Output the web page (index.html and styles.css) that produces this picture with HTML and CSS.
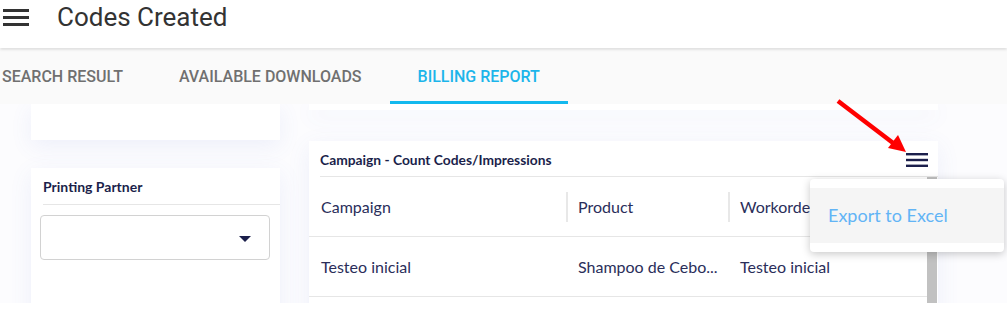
FILE: index.html
```html
<!DOCTYPE html>
<html lang="en">
<head>
    <meta charset="UTF-8">
    <meta name="viewport" content="width=device-width, initial-scale=1.0">
    <title>Codes Created</title>
    <link rel="stylesheet" href="styles.css">
</head>
<body>
    <header class="topbar">
        <svg class="menu-icon" width="26" height="18" viewBox="0 0 26 18">
            <rect x="0" y="1" width="26" height="3" fill="#333"/>
            <rect x="0" y="8" width="26" height="3" fill="#333"/>
            <rect x="0" y="15" width="26" height="3" fill="#333"/>
        </svg>
        <h1>Codes Created</h1>
    </header>

    <nav class="tabs">
        <div class="tab-list">
            <div class="tab">Search Result</div>
            <div class="tab">Available Downloads</div>
            <div class="tab active">Billing Report</div>
        </div>
    </nav>

    <main class="content">
        <div class="col-left">
            <div class="card card-top"></div>
            <div class="card filter-card">
                <div class="card-title">Printing Partner</div>
                <div class="select">
                    <span class="caret"></span>
                </div>
            </div>
        </div>

        <div class="col-right">
            <div class="card card-top-thin"></div>
            <div class="card report-card">
                <div class="report-head">
                    <span class="report-title">Campaign - Count Codes/Impressions</span>
                    <svg class="report-menu" width="22" height="14" viewBox="0 0 22 14">
                        <rect x="0" y="0" width="22" height="2.4" fill="#1b1f4b"/>
                        <rect x="0" y="5.8" width="22" height="2.4" fill="#1b1f4b"/>
                        <rect x="0" y="11.6" width="22" height="2.4" fill="#1b1f4b"/>
                    </svg>
                </div>
                <div class="table-wrap">
                    <div class="table">
                        <div class="row head">
                            <div class="cell">Campaign</div>
                            <div class="cell sep">Product</div>
                            <div class="cell sep">Workorder</div>
                        </div>
                        <div class="row">
                            <div class="cell">Testeo inicial</div>
                            <div class="cell">Shampoo de Cebo...</div>
                            <div class="cell">Testeo inicial</div>
                        </div>
                    </div>
                    <div class="scrollbar"></div>
                </div>

                <div class="dropdown">
                    <div class="dropdown-item">Export to Excel</div>
                </div>
            </div>
        </div>
    </main>

    <!-- annotation arrow pointing at the menu icon -->
    <svg class="arrow" width="76" height="60" viewBox="0 0 76 60">
        <line x1="3" y1="3" x2="62" y2="48" stroke="#ff0000" stroke-width="4.5"/>
        <polygon points="71,54 53,50 63,37" fill="#ff0000"/>
    </svg>
</body>
</html>
```

FILE: styles.css
```css
body {
    margin: 0;
    font-family: Roboto, "Liberation Sans", sans-serif;
    background: #ffffff;
    overflow: hidden;
    position: relative;
}
.topbar {
    height: 48px;
    box-sizing: border-box;
    padding-bottom: 14px;
    display: flex;
    align-items: center;
    background: #fff;
    box-shadow: 0 1px 3px rgba(0,0,0,0.18);
    position: relative;
    z-index: 2;
}
.menu-icon {
    margin-left: 3px;
}
.topbar h1 {
    margin: 0 0 0 28px;
    font-size: 26px;
    font-weight: 400;
    color: #333;
}
.tabs {
    height: 55px;
    background: #fafafa;
    margin-top: 1px;
}
.tab-list {
    display: flex;
    margin-left: -26px;
    height: 100%;
}
.tab {
    padding: 0 28px;
    display: flex;
    align-items: center;
    text-transform: uppercase;
    font-size: 16px;
    font-weight: 500;
    color: #707070;
    box-sizing: border-box;
    border-bottom: 3px solid transparent;
    padding-top: 3px;
}
.tab.active {
    color: #1cb5ea;
    border-bottom-color: #14b9ee;
}
.content {
    height: 199px;
    overflow: hidden;
    display: grid;
    grid-template-columns: 249px 629px;
    column-gap: 29px;
    padding-left: 31px;
    background: #fcfcfe;
    font-family: Lato, "Liberation Sans", sans-serif;
    color: #1b1f4b;
}
.col-left, .col-right {
    display: flex;
    flex-direction: column;
}
.col-left { gap: 28px; }
.col-right { gap: 31px; }
.card {
    background: #fff;
    box-shadow: 0 6px 22px rgba(90,110,210,0.09);
}
.card-top { height: 36px; flex: none; }
.card-top-thin { height: 6px; flex: none; }
.filter-card, .report-card { flex: 1; }
.card-title {
    font-weight: 700;
    font-size: 14px;
    margin-left: 12px;
    height: 36px;
    line-height: 38px;
    border-bottom: 1px solid #e6e6e6;
}
.select {
    margin: 10px 0 0 9px;
    width: 230px;
    height: 45px;
    box-sizing: border-box;
    border: 1px solid #d2d2d2;
    border-radius: 4px;
    position: relative;
}
.caret {
    position: absolute;
    right: 18px;
    top: 20px;
    width: 0;
    height: 0;
    border-left: 6px solid transparent;
    border-right: 6px solid transparent;
    border-top: 6px solid #1b1f4b;
}
.report-card {
    position: relative;
}
.report-head {
    margin-left: 11px;
    height: 35px;
    border-bottom: 1px solid #e6e6e6;
    display: flex;
    align-items: center;
    justify-content: space-between;
    padding-right: 10px;
}
.report-title {
    font-weight: 700;
    font-size: 13.8px;
    margin-top: 1px;
}
.report-menu {
    margin-top: 2px;
}
.table-wrap {
    display: flex;
}
.table {
    width: 618px;
}
.row {
    display: grid;
    grid-template-columns: 257px 162px 1fr;
    height: 59px;
    border-bottom: 1px solid #e6e6e6;
    align-items: center;
    font-size: 16px;
    color: #2a2e5a;
}
.cell {
    padding-left: 12px;
    white-space: nowrap;
    overflow: hidden;
}
.cell.sep {
    border-left: 2px solid #e8e8e8;
    line-height: 30px;
    padding-left: 10px;
}
.scrollbar {
    width: 10px;
    background: #c1c1c1;
    height: 200px;
}
.arrow {
    position: absolute;
    left: 835px;
    top: 98px;
    z-index: 5;
}
.dropdown {
    position: absolute;
    left: 501px;
    top: 38px;
    width: 194px;
    padding: 9px 0;
    background: #fff;
    border-radius: 4px;
    box-shadow: 0 2px 8px rgba(0,0,0,0.22);
    z-index: 4;
}
.dropdown-item {
    height: 55px;
    line-height: 55px;
    background: #f5f5f5;
    padding-left: 18px;
    font-size: 18px;
    color: #62b4f5;
}
```
